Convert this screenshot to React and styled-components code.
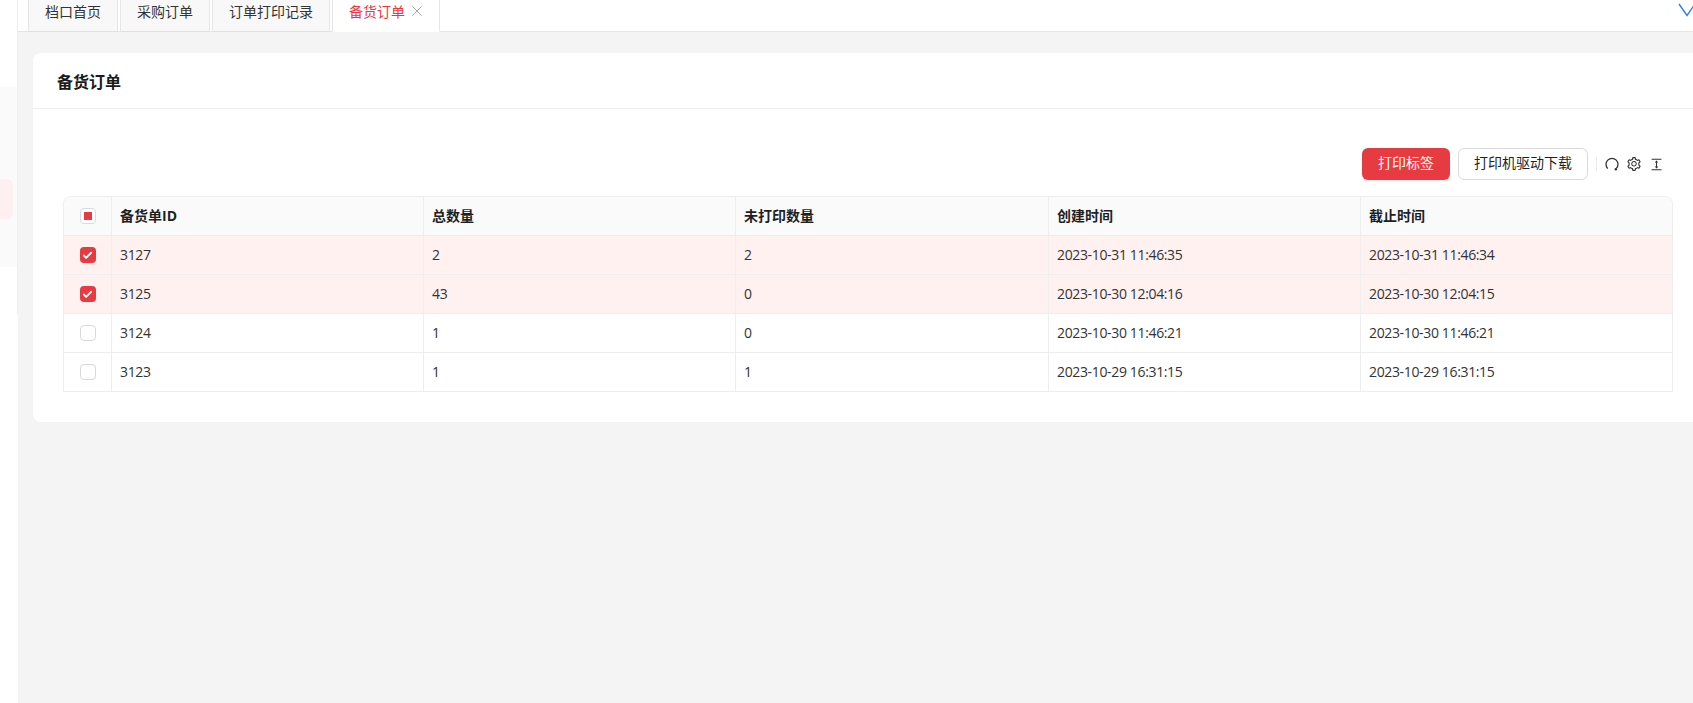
import React from 'react';
import styled, { createGlobalStyle } from 'styled-components';
import { X, Check } from 'lucide-react';
import { AiOutlineSetting, AiOutlineColumnHeight } from 'react-icons/ai';

const FONT = '"Open Sans", "Noto Sans CJK SC", sans-serif';

const tabs = [
  { label: '档口首页', width: 90 },
  { label: '采购订单', width: 90 },
  { label: '订单打印记录', width: 118 },
];

const rows = [
  { id: 3127, total: 2, left: 2, created: '2023-10-31 11:46:35', due: '2023-10-31 11:46:34', checked: true },
  { id: 3125, total: 43, left: 0, created: '2023-10-30 12:04:16', due: '2023-10-30 12:04:15', checked: true },
  { id: 3124, total: 1, left: 0, created: '2023-10-30 11:46:21', due: '2023-10-30 11:46:21', checked: false },
  { id: 3123, total: 1, left: 1, created: '2023-10-29 16:31:15', due: '2023-10-29 16:31:15', checked: false },
];

const GlobalStyle = createGlobalStyle`
  html, body {
    margin: 0;
    padding: 0;
    height: 100%;
    overflow: hidden;
    background: #f4f4f4;
    font-family: ${FONT};
    color: #1f1f1f;
  }
`;

const Page = styled.div`
  display: flex;
  width: 1693px;
  height: 703px;
  overflow: hidden;
`;

const Sidebar = styled.aside`
  flex: 0 0 18px;
  background: #fff;
`;

const SideMenu = styled.div`
  height: 315px;
  padding-top: 87px;
  box-sizing: border-box;
  border-right: 1px solid #efefef;
`;

const SideGroup = styled.div`
  height: 180px;
  padding-top: 92px;
  box-sizing: border-box;
  background: #fafafa;
`;

const SideActive = styled.div`
  width: 13px;
  height: 40px;
  background: #fef0f0;
  border-radius: 0 6px 6px 0;
`;

const Main = styled.main`
  flex: 1;
  min-width: 0;
`;

const TabBar = styled.div`
  position: relative;
  display: flex;
  gap: 2px;
  height: 32px;
  box-sizing: border-box;
  padding-left: 10px;
  background: #fff;
  border-bottom: 1px solid #e6e6e6;
`;

const Tab = styled.div`
  display: flex;
  align-items: center;
  gap: 3px;
  box-sizing: border-box;
  justify-content: ${p => (p.$active ? 'flex-start' : 'center')};
  width: ${p => p.$width}px;
  height: 32px;
  padding: ${p => (p.$active ? '0 0 10px 16px' : '0 0 10px')};
  font-size: 14px;
  color: ${p => (p.$active ? '#e8393f' : '#333')};
  background: ${p => (p.$active ? '#fff' : '#f8f8f8')};
  border: 1px solid #e6e6e6;
  border-top: none;
  border-bottom-color: ${p => (p.$active ? '#fff' : '#e0e0e0')};
`;

const CloseIcon = styled(X)`
  color: #a8a8a8;
`;

const MoreIcon = styled.svg`
  position: absolute;
  top: 3px;
  right: -3px;
  color: #2f80ed;
`;

const Content = styled.div`
  padding: 21px 0 0 15px;
  width: 1670px;
`;

const Card = styled.section`
  width: 1670px;
  background: #fff;
  border-radius: 8px;
  box-sizing: border-box;
`;

const CardHeader = styled.h2`
  margin: 0;
  height: 56px;
  padding: 0 24px;
  box-sizing: border-box;
  display: flex;
  align-items: center;
  font-size: 16px;
  font-weight: 700;
  color: #1a1a1a;
  border-bottom: 1px solid #eeeeee;
`;

const CardBody = styled.div`
  padding: 39px 30px 30px;
`;

const Toolbar = styled.div`
  display: flex;
  justify-content: flex-end;
  align-items: center;
  height: 32px;
  margin-bottom: 16px;
  padding-right: 10px;
`;

const PrimaryButton = styled.button`
  width: 88px;
  height: 32px;
  padding: 0 0 4px;
  font: 14px ${FONT};
  color: #fff;
  background: #e63b41;
  border: none;
  border-radius: 6px;
  box-shadow: 0 2px 0 rgba(232, 57, 63, 0.08);
`;

const DefaultButton = styled.button`
  width: 130px;
  height: 32px;
  margin-left: 8px;
  padding: 0 0 4px;
  font: 14px ${FONT};
  color: #1f1f1f;
  background: #fff;
  border: 1px solid #d9d9d9;
  border-radius: 6px;
`;

const Divider = styled.span`
  width: 1px;
  height: 14px;
  margin: 0 8px;
  background: #ececec;
`;

const ToolIcon = styled.span`
  display: flex;
  align-items: center;
  justify-content: center;
  width: 14px;
  height: 14px;
  margin-left: ${p => (p.$first ? '0' : '8px')};
  color: #333;
  svg { flex: none; }
`;

const TableWrap = styled.div`
  border: 1px solid #eeeeee;
  border-bottom: none;
  border-radius: 8px 8px 0 0;
  overflow: hidden;
`;

const Table = styled.table`
  width: 100%;
  table-layout: fixed;
  border-collapse: separate;
  border-spacing: 0;
  font-size: 14px;
`;

const Th = styled.th`
  height: 39px;
  padding: 0 8px 2px;
  text-align: left;
  font-weight: 700;
  font-size: 14px;
  color: #1f1f1f;
  background: #fafafa;
  box-sizing: border-box;
  border-bottom: 1px solid #eeeeee;
  border-right: 1px solid #eeeeee;
  &:last-child { border-right: none; }
`;

const Td = styled.td`
  height: 39px;
  padding: 0 8px 2px;
  color: #333;
  letter-spacing: -0.35px;
  box-sizing: border-box;
  background: ${p => (p.$selected ? '#fef1f0' : '#fff')};
  border-bottom: 1px solid #eeeeee;
  border-right: 1px solid #eeeeee;
  &:last-child { border-right: none; }
`;

const CheckHead = styled(Th)`
  padding: 0 8px;
`;

const CheckCell = styled(Td)`
  padding: 0 8px;
`;

const CheckBox = styled.span`
  display: flex;
  align-items: center;
  justify-content: center;
  width: 16px;
  height: 16px;
  margin: 0 auto;
  box-sizing: border-box;
  border-radius: 4px;
  border: ${p => (p.$on ? 'none' : '1px solid #d9d9d9')};
  background: ${p => (p.$on ? '#e63b41' : '#fff')};
  color: #fff;
`;

const Indeterminate = styled.span`
  width: 8px;
  height: 8px;
  background: #e63b41;
`;

const ReloadGlyph = () => (
  <svg width="14" height="14" viewBox="0 0 14 14" fill="none">
    <path d="M2.7 11.6A6 6 0 1 1 11.3 11.6" stroke="currentColor" strokeWidth="1.3" />
    <circle cx="10.8" cy="12.2" r="1.2" fill="currentColor" />
  </svg>
);

export default function App() {
  return (
    <>
      <GlobalStyle />
      <Page>
        <Sidebar>
          <SideMenu>
            <SideGroup>
              <SideActive />
            </SideGroup>
          </SideMenu>
        </Sidebar>
        <Main>
          <TabBar>
            {tabs.map(t => (
              <Tab key={t.label} $width={t.width}>{t.label}</Tab>
            ))}
            <Tab $active $width={108}>
              备货订单
              <CloseIcon size={18} strokeWidth={1.3} />
            </Tab>
            <MoreIcon width="18" height="14" viewBox="0 0 18 14" fill="none" stroke="currentColor" strokeWidth="1.4">
              <path d="M1 1l8 11.5L17 1" />
            </MoreIcon>
          </TabBar>
          <Content>
            <Card>
              <CardHeader>备货订单</CardHeader>
              <CardBody>
                <Toolbar>
                  <PrimaryButton>打印标签</PrimaryButton>
                  <DefaultButton>打印机驱动下载</DefaultButton>
                  <Divider />
                  <ToolIcon $first><ReloadGlyph /></ToolIcon>
                  <ToolIcon><AiOutlineSetting size={16} /></ToolIcon>
                  <ToolIcon><AiOutlineColumnHeight size={15} /></ToolIcon>
                </Toolbar>
                <TableWrap>
                  <Table>
                    <colgroup>
                      <col style={{ width: 48 }} />
                      <col style={{ width: 312 }} />
                      <col style={{ width: 312 }} />
                      <col style={{ width: 313 }} />
                      <col style={{ width: 312 }} />
                      <col />
                    </colgroup>
                    <thead>
                      <tr>
                        <CheckHead><CheckBox><Indeterminate /></CheckBox></CheckHead>
                        <Th>备货单ID</Th>
                        <Th>总数量</Th>
                        <Th>未打印数量</Th>
                        <Th>创建时间</Th>
                        <Th>截止时间</Th>
                      </tr>
                    </thead>
                    <tbody>
                      {rows.map(r => (
                        <tr key={r.id}>
                          <CheckCell $selected={r.checked}>
                            <CheckBox $on={r.checked}>
                              {r.checked && <Check size={11} strokeWidth={4} />}
                            </CheckBox>
                          </CheckCell>
                          <Td $selected={r.checked}>{r.id}</Td>
                          <Td $selected={r.checked}>{r.total}</Td>
                          <Td $selected={r.checked}>{r.left}</Td>
                          <Td $selected={r.checked}>{r.created}</Td>
                          <Td $selected={r.checked}>{r.due}</Td>
                        </tr>
                      ))}
                    </tbody>
                  </Table>
                </TableWrap>
              </CardBody>
            </Card>
          </Content>
        </Main>
      </Page>
    </>
  );
}
